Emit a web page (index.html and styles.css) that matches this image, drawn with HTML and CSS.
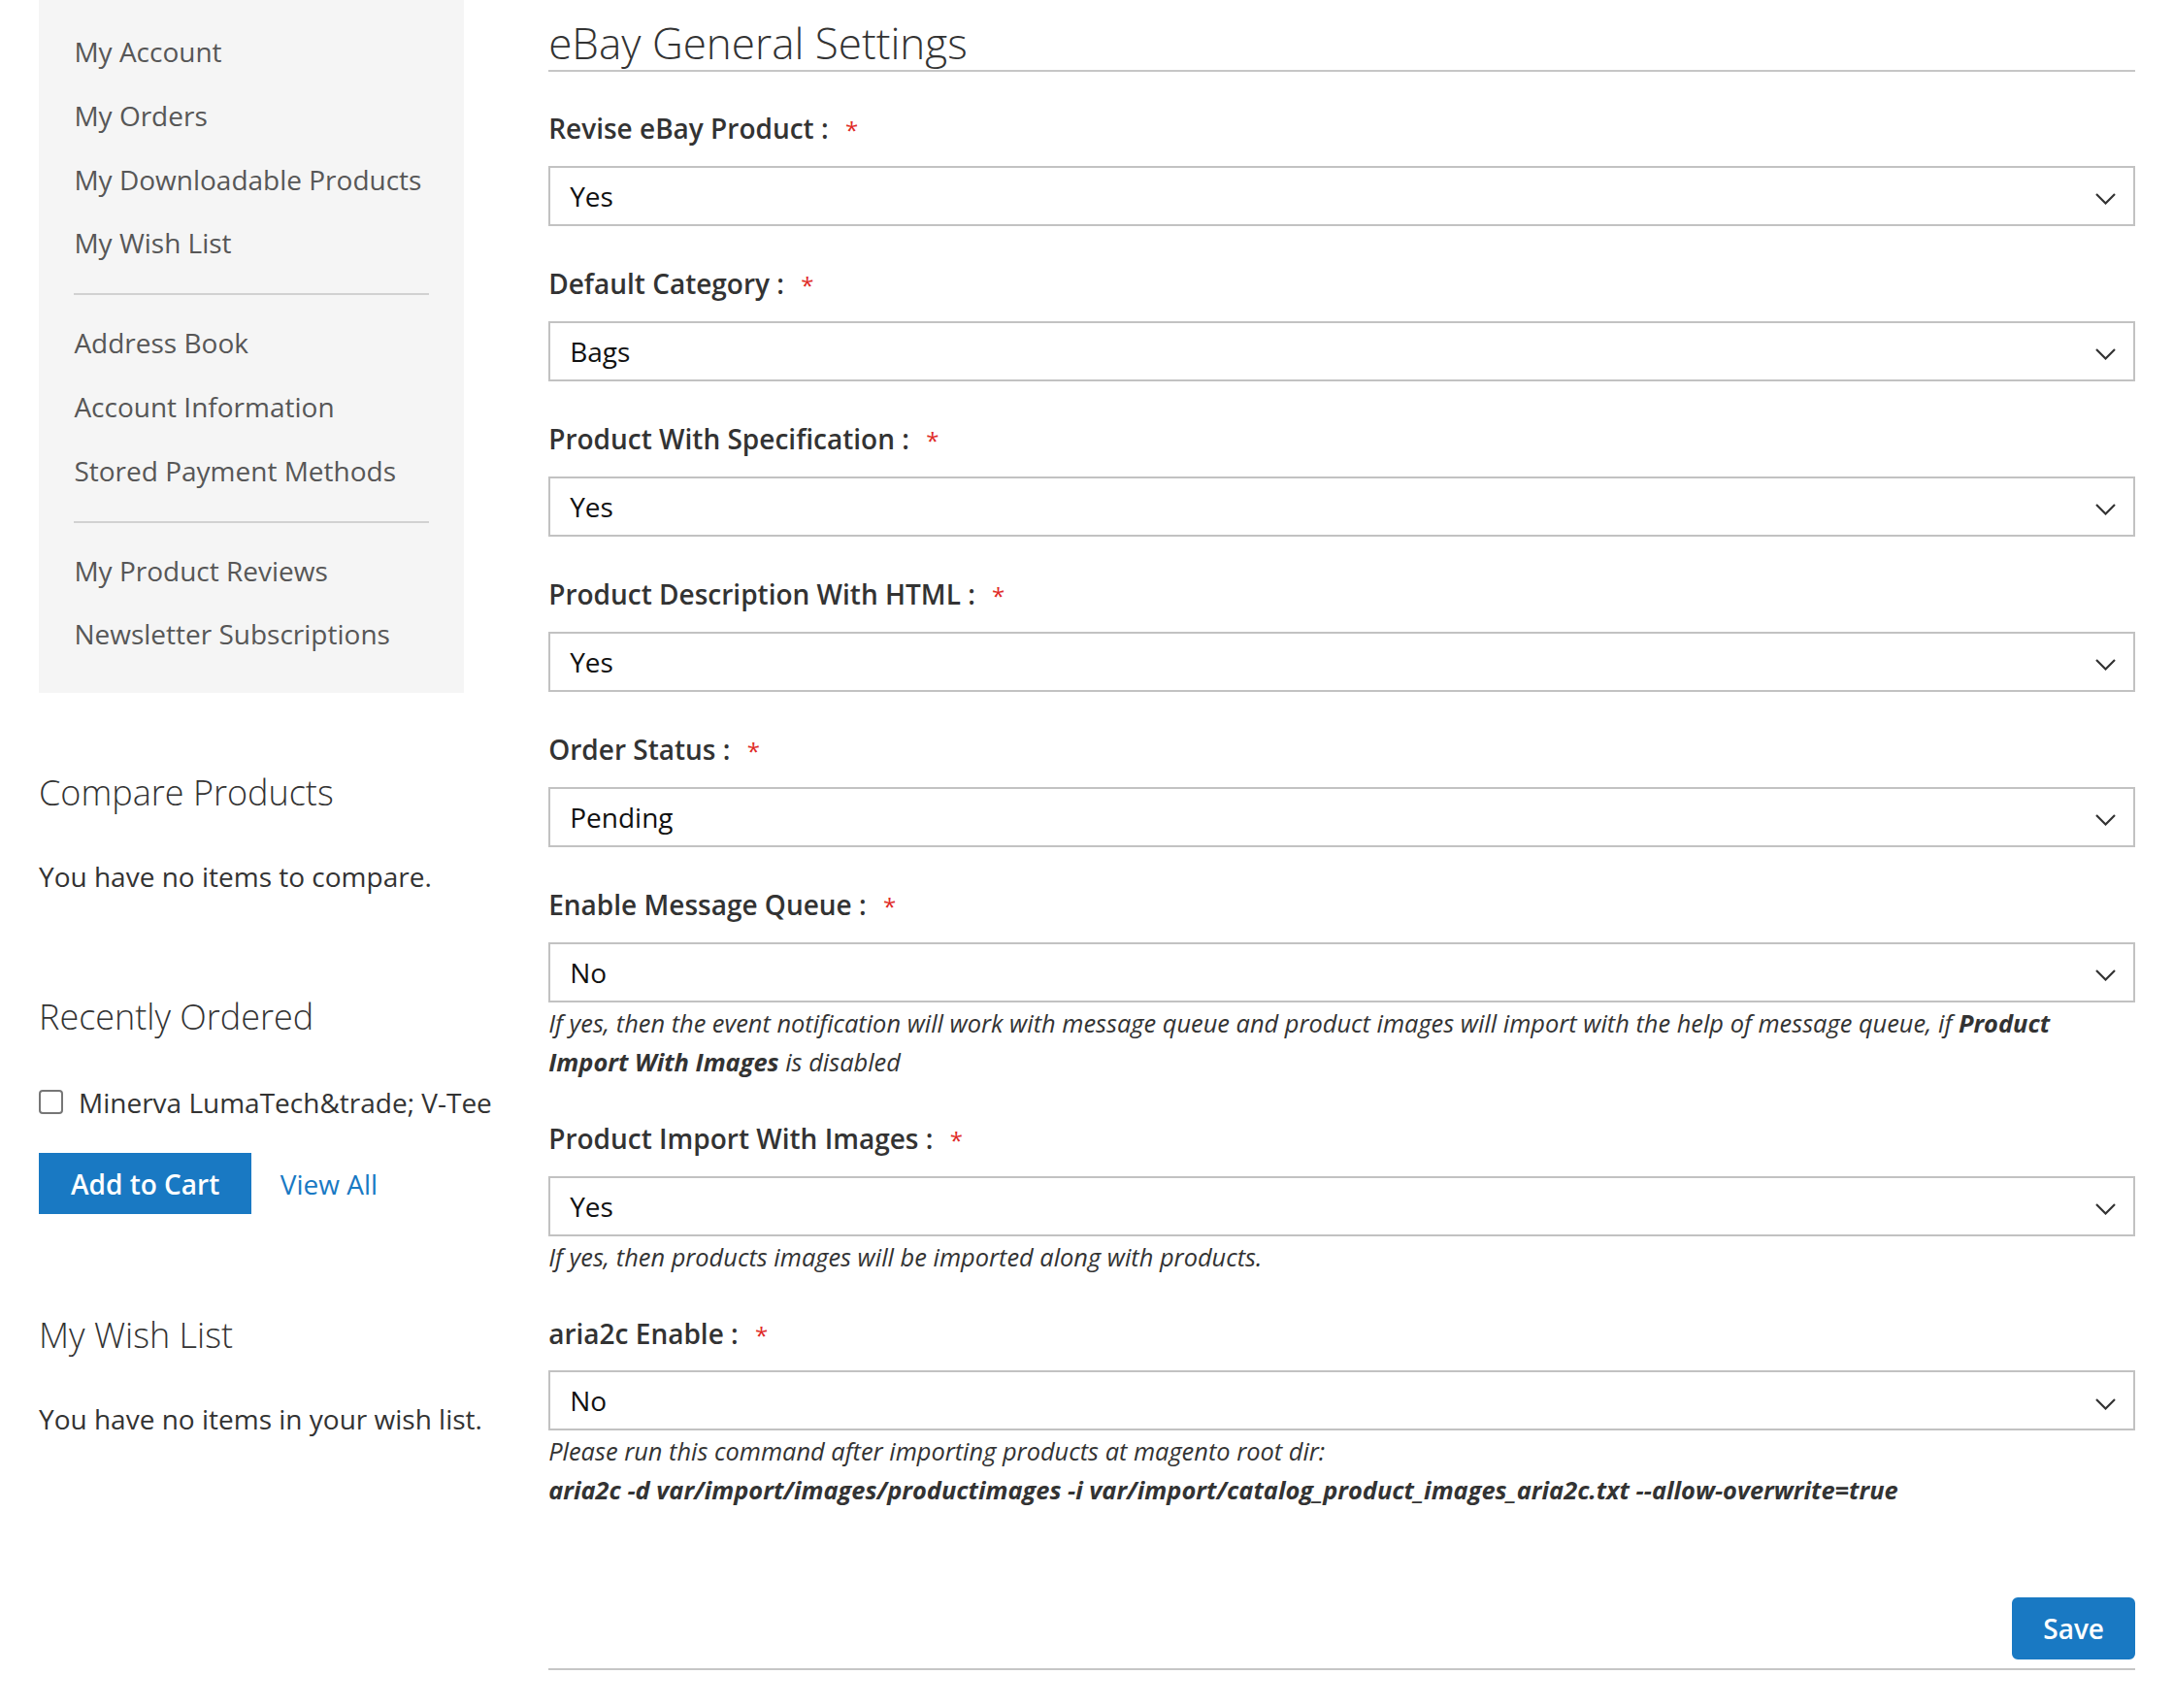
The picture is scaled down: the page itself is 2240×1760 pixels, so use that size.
FILE: index.html
```html
<!DOCTYPE html>
<html lang="en">
<head>
<meta charset="utf-8">
<title>eBay General Settings</title>
<link rel="stylesheet" href="styles.css">
</head>
<body>
<div class="page">
  <aside class="sidebar">
    <nav class="nav">
      <div class="nav-item">My Account</div>
      <div class="nav-item">My Orders</div>
      <div class="nav-item">My Downloadable Products</div>
      <div class="nav-item">My Wish List</div>
      <div class="nav-sep"></div>
      <div class="nav-item">Address Book</div>
      <div class="nav-item">Account Information</div>
      <div class="nav-item">Stored Payment Methods</div>
      <div class="nav-sep"></div>
      <div class="nav-item">My Product Reviews</div>
      <div class="nav-item">Newsletter Subscriptions</div>
    </nav>

    <section class="block block-first">
      <div class="block-title">Compare Products</div>
      <div class="block-text">You have no items to compare.</div>
    </section>

    <section class="block">
      <div class="block-title">Recently Ordered</div>
      <label class="check-row"><input type="checkbox" class="check"><span>Minerva LumaTech&amp;trade; V-Tee</span></label>
      <div class="block-actions">
        <button class="btn btn-cart" type="button">Add to Cart</button>
        <span class="link">View All</span>
      </div>
    </section>

    <section class="block">
      <div class="block-title">My Wish List</div>
      <div class="block-text">You have no items in your wish list.</div>
    </section>
  </aside>

  <main class="main">
    <div class="legend">eBay General Settings</div>
    <div class="fields">
      <div class="field">
        <div class="label">Revise eBay Product : </div>
        <div class="select"><span>Yes</span><svg class="chev" viewBox="0 0 21 12"><path d="M1 1 L10.5 10.5 L20 1"/></svg></div>
      </div>
      <div class="field">
        <div class="label">Default Category : </div>
        <div class="select"><span>Bags</span><svg class="chev" viewBox="0 0 21 12"><path d="M1 1 L10.5 10.5 L20 1"/></svg></div>
      </div>
      <div class="field">
        <div class="label">Product With Specification : </div>
        <div class="select"><span>Yes</span><svg class="chev" viewBox="0 0 21 12"><path d="M1 1 L10.5 10.5 L20 1"/></svg></div>
      </div>
      <div class="field">
        <div class="label">Product Description With HTML : </div>
        <div class="select"><span>Yes</span><svg class="chev" viewBox="0 0 21 12"><path d="M1 1 L10.5 10.5 L20 1"/></svg></div>
      </div>
      <div class="field">
        <div class="label">Order Status : </div>
        <div class="select"><span>Pending</span><svg class="chev" viewBox="0 0 21 12"><path d="M1 1 L10.5 10.5 L20 1"/></svg></div>
      </div>
      <div class="field">
        <div class="label">Enable Message Queue : </div>
        <div class="select"><span>No</span><svg class="chev" viewBox="0 0 21 12"><path d="M1 1 L10.5 10.5 L20 1"/></svg></div>
        <div class="note">If yes, then the event notification will work with message queue and product images will import with the help of message queue, if <b>Product</b><br><b>Import With Images</b> is disabled</div>
      </div>
      <div class="field">
        <div class="label">Product Import With Images : </div>
        <div class="select"><span>Yes</span><svg class="chev" viewBox="0 0 21 12"><path d="M1 1 L10.5 10.5 L20 1"/></svg></div>
        <div class="note">If yes, then products images will be imported along with products.</div>
      </div>
      <div class="field">
        <div class="label">aria2c Enable : </div>
        <div class="select"><span>No</span><svg class="chev" viewBox="0 0 21 12"><path d="M1 1 L10.5 10.5 L20 1"/></svg></div>
        <div class="note">Please run this command after importing products at magento root dir:<br><b>aria2c -d var/import/images/productimages -i var/import/catalog_product_images_aria2c.txt --allow-overwrite=true</b></div>
      </div>
    </div>
    <div class="actions">
      <button class="btn btn-save" type="button">Save</button>
    </div>
  </main>
</div>
</body>
</html>
```
FILE: styles.css
```css
* {
  box-sizing: border-box;
}

html,
body {
  margin: 0;
  padding: 0;
  background: #ffffff;
}

body {
  font-family: "Open Sans", "Liberation Sans", Arial, sans-serif;
  font-size: 28px;
  color: #333333;
}

.page {
  display: flex;
  align-items: flex-start;
  gap: 87.7px;
  padding: 0 40px;
  height: 1760px;
  overflow: hidden;
}

/* ---------- sidebar ---------- */
.sidebar {
  width: 437.5px;
  flex: none;
}

.nav {
  background: #f5f5f5;
  padding: 21px 0 26.8px;
}

.nav-item {
  line-height: 65.8px;
  padding-left: 36.4px;
  color: #575757;
  font-size: 28px;
  white-space: nowrap;
}

.nav-sep {
  height: 2px;
  background: #d1d1d1;
  margin: 18px 35.5px 17px 36.4px;
}

.block {
  margin-bottom: 99.5px;
  white-space: nowrap;
}

.block-first {
  margin-top: 78.3px;
}

.block-title {
  font-size: 36px;
  font-weight: 300;
  line-height: 50px;
  color: #333333;
  margin-bottom: 41px;
}

.block-text {
  line-height: 40px;
  font-size: 28px;
}

.check-row {
  display: flex;
  align-items: center;
  height: 44px;
  font-size: 28px;
}

.check {
  appearance: none;
  -webkit-appearance: none;
  width: 25px;
  height: 25px;
  margin: 0 16px 0 0;
  border: 2px solid #767676;
  border-radius: 4px;
  background: #ffffff;
  flex: none;
}

.block-actions {
  display: flex;
  align-items: center;
  margin-top: 30.2px;
}

.btn {
  font-family: inherit;
  font-size: 28px;
  font-weight: 600;
  line-height: 32px;
  color: #ffffff;
  background: #1979c3;
  border: 2px solid #1979c3;
  cursor: pointer;
}

.btn-cart {
  padding: 13.7px 31px;
  border-radius: 0;
}

.link {
  margin-left: 29.5px;
  color: #1979c3;
  font-size: 28px;
}

/* ---------- main ---------- */
.main {
  flex: 1;
  min-width: 0;
}

.legend {
  font-size: 44px;
  font-weight: 300;
  line-height: 55px;
  margin-top: 17px;
  border-bottom: 2px solid #c6c6c6;
  color: #333333;
  white-space: nowrap;
}

.fields {
  margin-top: 38.3px;
}

.field {
  margin-bottom: 39.7px;
}

.label {
  font-size: 28px;
  font-weight: 600;
  line-height: 40px;
  margin-bottom: 18.3px;
  color: #333333;
  white-space: pre;
}

.label::after {
  content: "*";
  color: #e02b27;
  font-size: 24px;
  font-weight: 400;
  line-height: 1;
  margin-left: 10px;
}

.select {
  display: flex;
  align-items: center;
  justify-content: space-between;
  height: 62px;
  padding: 0 18.4px 0 20px;
  border: 2px solid #c2c2c2;
  background: #ffffff;
  font-size: 28px;
  color: #111111;
}

.chev {
  width: 21px;
  height: 12px;
  margin-top: 7px;
  fill: none;
  stroke: #333333;
  stroke-width: 2.2;
  flex: none;
}

.note {
  font-size: 25.4px;
  font-style: italic;
  line-height: 40px;
  margin-top: 1px;
  color: #333333;
  white-space: nowrap;
}

.note b {
  font-weight: 700;
}

.actions {
  display: flex;
  justify-content: flex-end;
  margin-top: 90.3px;
  padding-bottom: 9.6px;
  border-bottom: 2px solid #c6c6c6;
}

.btn-save {
  padding: 14px 30px;
  border-radius: 6px;
}
```
